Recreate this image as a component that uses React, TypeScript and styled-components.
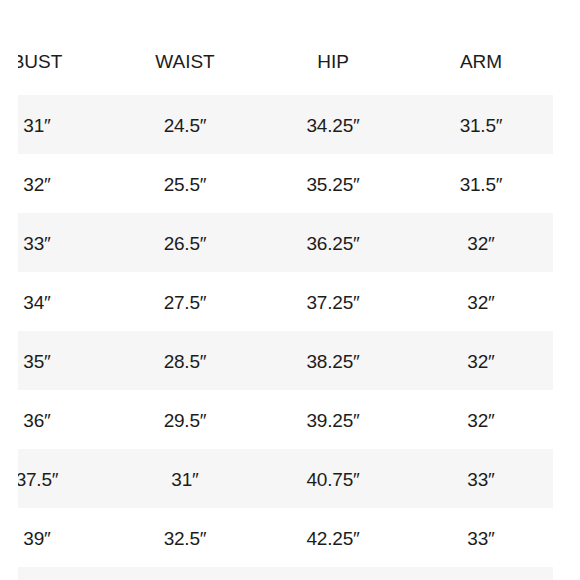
import * as React from 'react';
import styled, { createGlobalStyle } from 'styled-components';

const GlobalStyle = createGlobalStyle`
  html, body {
    margin: 0;
    padding: 0;
    background: #ffffff;
  }
  body {
    font-family: 'Liberation Sans', Arial, Helvetica, sans-serif;
    color: #1c1c1c;
  }
`;

const ChartWrapper = styled.section`
  width: 580px;
  height: 580px;
  overflow: hidden;
  padding: 28px 0 0 18px;
  box-sizing: border-box;
`;

const ScrollClip = styled.div`
  width: 535px;
  overflow: hidden;
`;

const Table = styled.div`
  width: 592px;
  margin-left: -55px;
  display: flex;
  flex-direction: column;
`;

const Row = styled.div<{ $shaded?: boolean; $header?: boolean }>`
  display: grid;
  grid-template-columns: repeat(4, 148px);
  height: ${({ $header }) => ($header ? '67px' : '59px')};
  background: ${({ $shaded }) => ($shaded ? '#f6f6f6' : 'transparent')};
  align-items: center;
`;

const Cell = styled.div<{ $header?: boolean }>`
  text-align: center;
  font-size: 19px;
  line-height: 1;
  letter-spacing: ${({ $header }) => ($header ? '0' : '-0.2px')};
  padding-top: ${({ $header }) => ($header ? '0' : '2px')};
  white-space: nowrap;
`;

const HEADERS = ['BUST', 'WAIST', 'HIP', 'ARM'];

const ROWS: string[][] = [
  ['31', '24.5', '34.25', '31.5'],
  ['32', '25.5', '35.25', '31.5'],
  ['33', '26.5', '36.25', '32'],
  ['34', '27.5', '37.25', '32'],
  ['35', '28.5', '38.25', '32'],
  ['36', '29.5', '39.25', '32'],
  ['37.5', '31', '40.75', '33'],
  ['39', '32.5', '42.25', '33'],
  ['40.5', '34', '43.75', '33.5'],
];

const App: React.FunctionComponent = () => (
  <>
    <GlobalStyle />
    <ChartWrapper>
      <ScrollClip>
        <Table>
          <Row $header>
            {HEADERS.map((h) => (
              <Cell key={h} $header>
                {h}
              </Cell>
            ))}
          </Row>
          {ROWS.map((row, i) => (
            <Row key={i} $shaded={i % 2 === 0}>
              {row.map((value, j) => (
                <Cell key={j}>{value}″</Cell>
              ))}
            </Row>
          ))}
        </Table>
      </ScrollClip>
    </ChartWrapper>
  </>
);

export default App;
